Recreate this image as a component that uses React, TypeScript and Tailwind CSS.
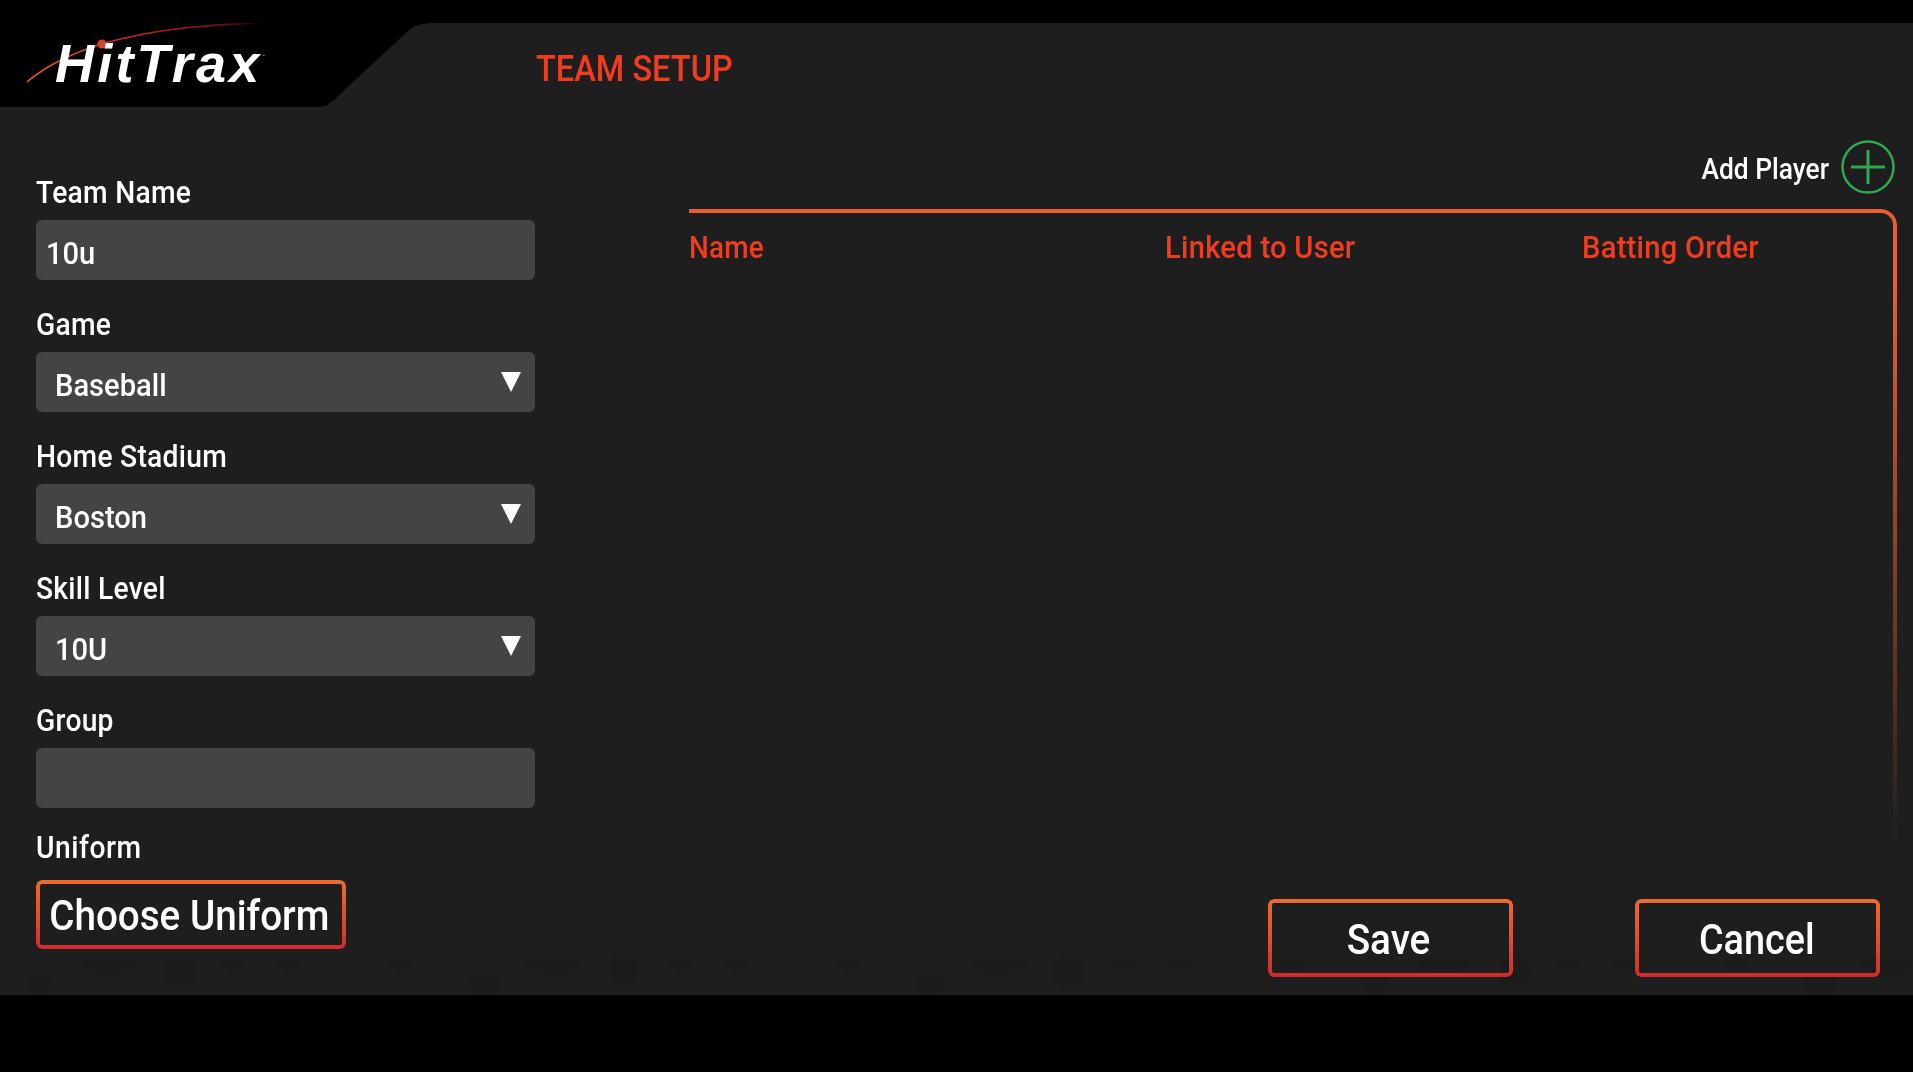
const font = "font-['Roboto','Liberation_Sans',sans-serif]"
const narrow = "inline-block origin-left scale-x-[0.91] whitespace-nowrap"
const narrowCenter = "inline-block origin-center whitespace-nowrap"

function GradientBorder() {
  // orange to red ring, the middle stays see-through so the panel pattern shows
  return (
    <span className="absolute inset-0 rounded-[6px] p-[4px] bg-gradient-to-b from-[#ee6c2e] to-[#cf2a2c] [mask-image:linear-gradient(#000_0_0),linear-gradient(#000_0_0)] [mask-clip:content-box,border-box] [mask-composite:exclude]" />
  )
}

function Logo() {
  return (
    <div className="absolute left-0 top-0 w-[440px] h-[84px]">
      <svg width="440" height="84" viewBox="0 0 440 84" className="absolute left-0 top-0">
        <path d="M0 0H436C422 0 414 2 407 9L339 72C332 80 327 84 316 84H0Z" fill="#000" />
        <defs>
          <linearGradient id="swoosh" x1="27" y1="0" x2="264" y2="0" gradientUnits="userSpaceOnUse">
            <stop offset="0" stopColor="#e0622c" />
            <stop offset="0.45" stopColor="#b0261f" />
            <stop offset="0.8" stopColor="#7a1216" />
            <stop offset="1" stopColor="#000" />
          </linearGradient>
        </defs>
        <path d="M27 59C75 18 160 2 264 0" fill="none" stroke="url(#swoosh)" strokeWidth="1.6" />
        <circle cx="102" cy="21" r="4.5" fill="#d8432f" />
      </svg>
      <span className="absolute left-[55px] top-[10px] text-white italic font-bold text-[54px] leading-[60px] tracking-[3.2px] font-['Liberation_Sans',sans-serif]">
        HitTrax
      </span>
      <span className="absolute left-[262px] top-[30px] text-[#bbb] text-[5px] leading-[6px]">™</span>
    </div>
  )
}

function Pattern() {
  return (
    <svg className="absolute left-0 top-[930px] w-full h-[42px] blur-[1px]" height="42">
      <defs>
        <pattern id="dots" x="-43" y="0" width="445" height="42" patternUnits="userSpaceOnUse">
          <ellipse cx="83" cy="30" rx="14" ry="9" fill="#1c1c1c" />
          <ellipse cx="152" cy="12" rx="27" ry="9" fill="#1c1c1c" />
          <rect x="208" y="2" width="28" height="33" rx="12" fill="#1c1c1c" />
          <path d="M263 12L277 3L291 12L277 21Z M319 12L333 3L347 12L333 21Z" fill="#1c1c1c" />
          <path d="M431 12L445 3L459 12L445 21Z M-14 12L0 3L14 12L0 21Z" fill="#1c1c1c" />
        </pattern>
      </defs>
      <rect width="100%" height="42" fill="url(#dots)" />
    </svg>
  )
}

function Label({ children }: { children: string }) {
  return (
    <div className="h-[36px] mb-[9px] leading-[36px] text-[31px] font-medium text-white tracking-[0.3px]">
      <span className={narrow}>{children}</span>
    </div>
  )
}

function Field({ label, value, select }: { label: string; value: string; select?: boolean }) {
  return (
    <div>
      <Label>{label}</Label>
      <div className={`h-[60px] w-[499px] rounded-[6px] bg-[#444444] flex items-center justify-between text-[32px] font-medium text-white ${select ? "pl-[19px] pr-[14px]" : "pl-[10px]"}`}>
        <span className={`${narrow} pt-[5px]`}>{value}</span>
        {select && <span className="w-0 h-0 border-x-[10px] border-x-transparent border-t-[20px] border-t-white" />}
      </div>
    </div>
  )
}

export default function App() {
  return (
    <div className={`${font} w-[1913px] h-[1072px] bg-black flex flex-col overflow-hidden`}>
      <div className="h-[23px] shrink-0" />
      <div className="relative h-[972px] shrink-0 bg-[#1e1e1e]">
        <Pattern />
        <Logo />

        <div className="relative h-[84px] pl-[536px] flex items-center">
          <h1 className="inline-block origin-left scale-x-[0.88] whitespace-nowrap text-[37px] font-medium text-[#f23c1e] pt-[7px]">TEAM SETUP</h1>
        </div>

        <div className="relative flex">
          {/* form column */}
          <div className="w-[689px] pl-[36px] pt-[68px] shrink-0">
            <div className="flex flex-col gap-[27px]">
              <Field label="Team Name" value="10u" />
              <Field label="Game" value="Baseball" select />
              <Field label="Home Stadium" value="Boston" select />
              <Field label="Skill Level" value="10U" select />
              <Field label="Group" value="" />
            </div>
            <div className="mt-[22px] h-[36px] mb-[14px] leading-[36px] text-[31px] font-medium text-white tracking-[0.6px]">
              <span className={narrow}>Uniform</span>
            </div>
            <button className="relative block w-[310px] h-[69px] pt-[2px] pr-[3px] text-[42px] font-medium text-white text-center">
              <GradientBorder />
              <span className={`${narrowCenter} scale-x-[0.92]`}>Choose Uniform</span>
            </button>
          </div>

          {/* roster column */}
          <div className="flex-1">
            <div className="h-[102px] pt-[18px] pr-[18px] flex items-center justify-end gap-[12px]">
              <span className="inline-block origin-right scale-x-[0.88] whitespace-nowrap text-[30px] font-medium text-white pt-[3px]">Add Player</span>
              <svg width="54" height="54" viewBox="0 0 54 54">
                <circle cx="27" cy="27" r="25.5" fill="none" stroke="#2fa84f" strokeWidth="2.5" />
                <path d="M27 10V44M10 27H44" stroke="#2fa84f" strokeWidth="3" />
              </svg>
            </div>
            <div className="h-[641px] w-[1208px] border-t-[4px] border-r-[4px] border-[#e8602e] rounded-tr-[16px] pt-[16px] flex text-[32px] font-medium text-[#f23c1e] leading-[36px] tracking-[0.3px] [mask-image:linear-gradient(to_bottom,black_12%,transparent_100%)]">
              <div className="w-[476px]"><span className="inline-block origin-left scale-x-[0.87] whitespace-nowrap">Name</span></div>
              <div className="w-[417px]"><span className={narrow}>Linked to User</span></div>
              <div><span className={narrow}>Batting Order</span></div>
            </div>
            <div className="mt-[49px] pr-[33px] flex justify-end gap-[122px]">
              <button className="relative w-[245px] h-[78px] pt-[2px] pr-[4px] text-[43px] font-medium text-white">
                <GradientBorder />
                <span className={`${narrowCenter} scale-x-[0.9]`}>Save</span>
              </button>
              <button className="relative w-[245px] h-[78px] pt-[2px] pr-[2px] text-[43px] font-medium text-white">
                <GradientBorder />
                <span className={`${narrowCenter} scale-x-[0.88]`}>Cancel</span>
              </button>
            </div>
          </div>
        </div>
      </div>
    </div>
  )
}
